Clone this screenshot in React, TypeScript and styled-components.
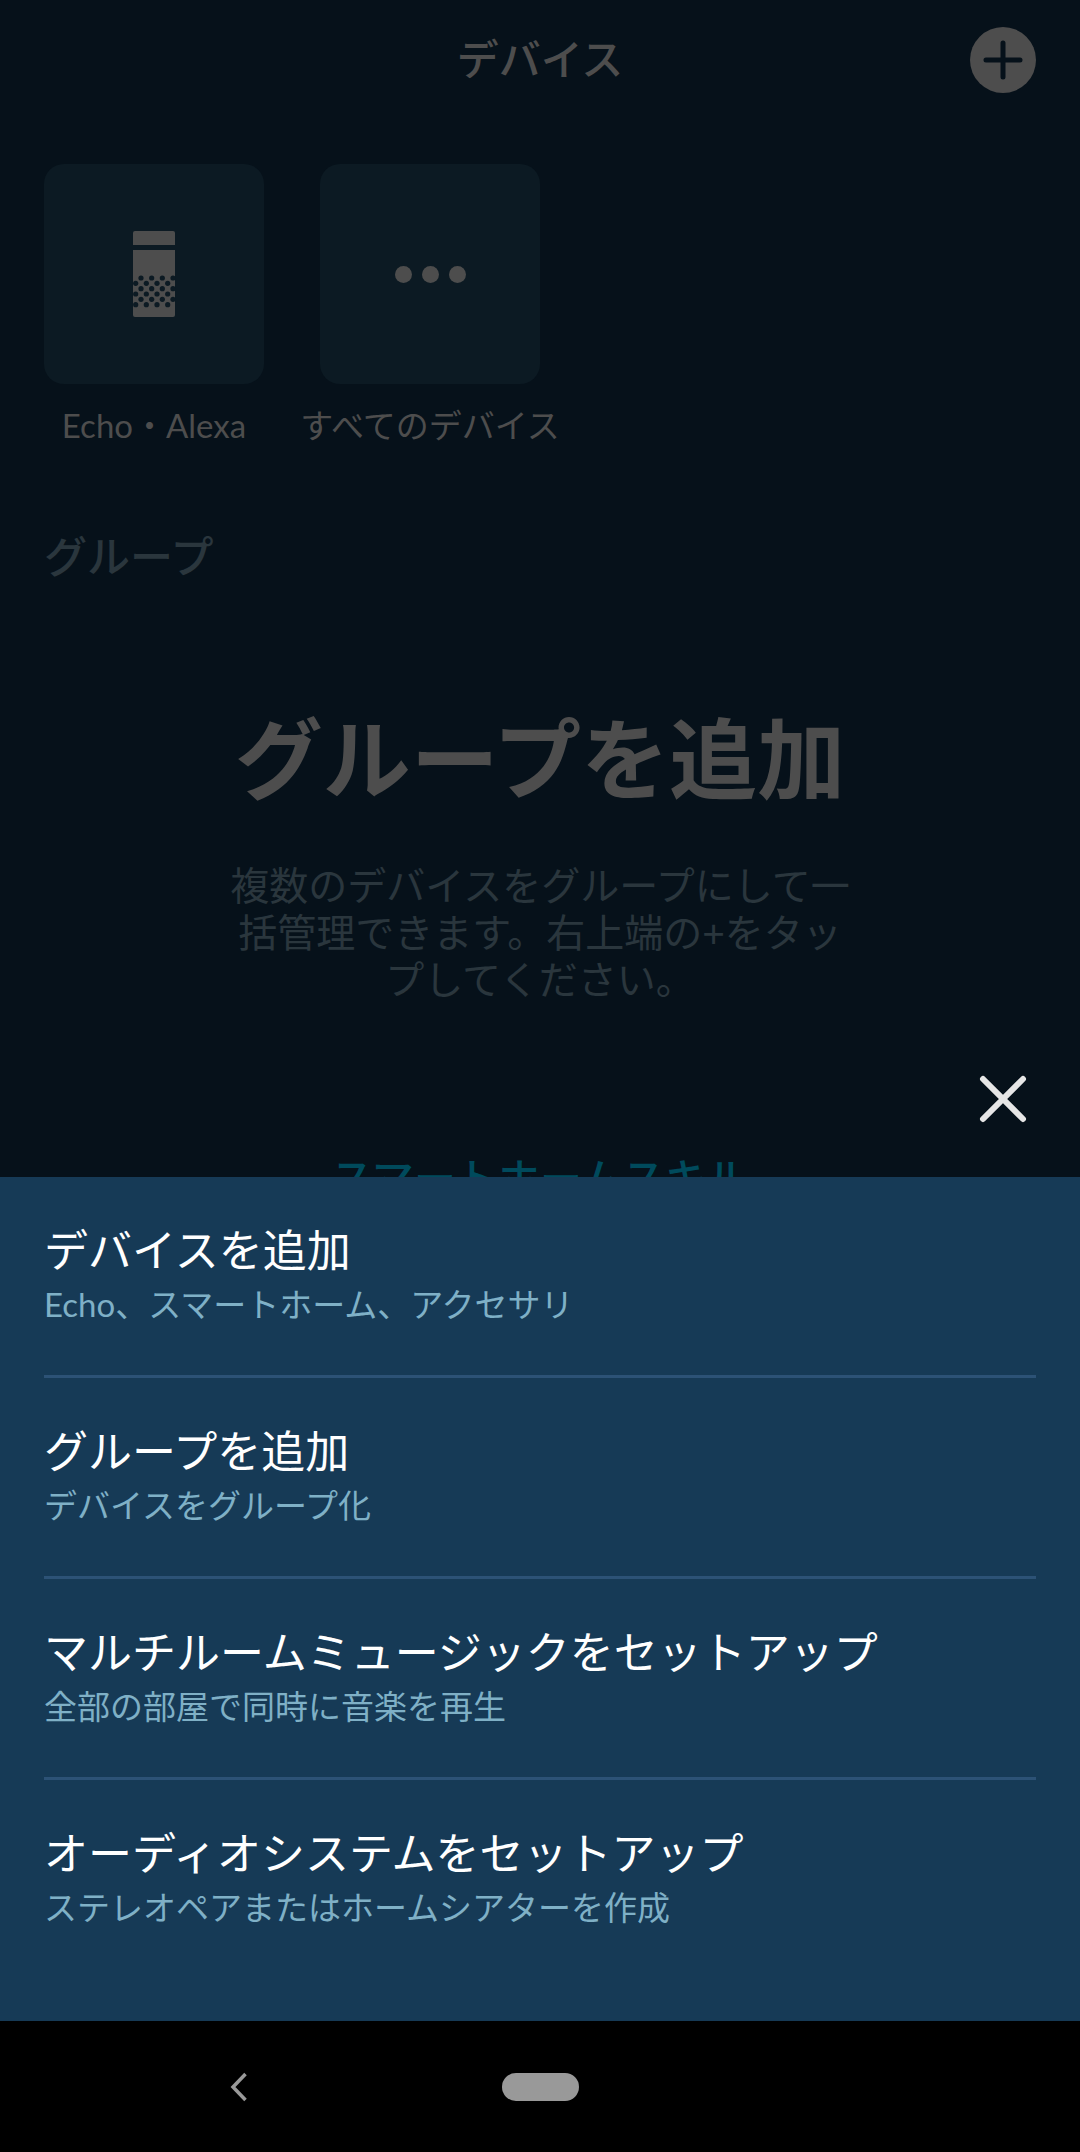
import React from 'react';
import styled, { createGlobalStyle } from 'styled-components';

const GlobalStyle = createGlobalStyle`
  html, body {
    margin: 0;
    padding: 0;
    background: #000;
  }
  * {
    box-sizing: border-box;
  }
  body {
    font-family: Lato, "Noto Sans CJK JP", "Noto Sans", sans-serif;
  }
`;

const menuItems = [
  { title: 'デバイスを追加', sub: 'Echo、スマートホーム、アクセサリ' },
  { title: 'グループを追加', sub: 'デバイスをグループ化' },
  { title: 'マルチルームミュージックをセットアップ', sub: '全部の部屋で同時に音楽を再生' },
  { title: 'オーディオシステムをセットアップ', sub: 'ステレオペアまたはホームシアターを作成' },
];

const speakerHoles: [number, number][] = [];
for (let row = 0; row < 6; row++) {
  for (let col = 0; col < 4; col++) {
    speakerHoles.push([row % 2 === 0 ? 8 + col * 10.67 : 2.67 + col * 10.67, 47 + row * 5.33]);
  }
}

const SpeakerIcon = () => (
  <svg width="44" height="86" viewBox="0 0 44 86">
    <path d="M2 0h38a2 2 0 0 1 2 2v12H0V2a2 2 0 0 1 2-2z" transform="translate(1 0)" fill="#4d4d4d" />
    <path d="M0 19h42v65a2 2 0 0 1-2 2H2a2 2 0 0 1-2-2z" transform="translate(1 0)" fill="#4d4d4d" />
    {speakerHoles.map(([x, y]) => (
      <circle key={`${x}-${y}`} cx={x + 1} cy={y} r="2.6" fill="#0c1a23" />
    ))}
  </svg>
);

const App: React.FC = () => {
  return (
    <>
      <GlobalStyle />
      <Screen>
        <Main>
          <Header>
            <Title>デバイス</Title>
            <AddButton>
              <svg width="40" height="40" viewBox="0 0 40 40">
                <path d="M20 3v34M3 20h34" stroke="#06111a" strokeWidth="5" strokeLinecap="round" />
              </svg>
            </AddButton>
          </Header>

          <Shortcuts>
            <Shortcut>
              <ShortcutCard>
                <SpeakerIcon />
              </ShortcutCard>
              <ShortcutLabel>Echo・Alexa</ShortcutLabel>
            </Shortcut>
            <Shortcut>
              <ShortcutCard>
                <Dots>
                  <Dot />
                  <Dot />
                  <Dot />
                </Dots>
              </ShortcutCard>
              <ShortcutLabel>すべてのデバイス</ShortcutLabel>
            </Shortcut>
          </Shortcuts>

          <SectionTitle>グループ</SectionTitle>

          <EmptyState>
            <EmptyTitle>グループを追加</EmptyTitle>
            <EmptyText>
              複数のデバイスをグループにして一
              <br />
              括管理できます。右上端の+をタッ
              <br />
              プしてください。
            </EmptyText>
            <SkillLink>スマートホームスキル</SkillLink>
          </EmptyState>

          <CloseButton>
            <svg width="48" height="48" viewBox="0 0 48 48">
              <path d="M4 4l40 40M44 4L4 44" stroke="#e6e6e6" strokeWidth="6" strokeLinecap="round" />
            </svg>
          </CloseButton>

          <Sheet>
            {menuItems.map((item, i) => (
              <MenuRow key={item.title} $last={i === menuItems.length - 1}>
                <MenuTitle>{item.title}</MenuTitle>
                <MenuSub>{item.sub}</MenuSub>
              </MenuRow>
            ))}
          </Sheet>
        </Main>

        <NavBar>
          <BackIcon>
            <svg width="20" height="30" viewBox="0 0 20 30">
              <path d="M17.5 2L5 15l12.5 13" fill="none" stroke="#999" strokeWidth="3.5" />
            </svg>
          </BackIcon>
          <HomePill />
        </NavBar>
      </Screen>
    </>
  );
};

const Screen = styled.div`
  width: 1080px;
  height: 2152px;
  display: flex;
  flex-direction: column;
  overflow: hidden;
`;

const Main = styled.main`
  position: relative;
  flex: 1;
  background: #06111a;
  overflow: hidden;
`;

const Header = styled.header`
  position: relative;
  height: 116px;
  padding-top: 2px;
  display: flex;
  align-items: center;
  justify-content: center;
`;

const Title = styled.h1`
  margin: 0;
  font-size: 42px;
  line-height: 60px;
  font-weight: 500;
  color: #4d4d4d;
`;

const AddButton = styled.div`
  position: absolute;
  top: 27px;
  right: 44px;
  width: 66px;
  height: 66px;
  border-radius: 50%;
  background: #4d4d4d;
  display: flex;
  align-items: center;
  justify-content: center;
`;

const Shortcuts = styled.div`
  display: flex;
  gap: 56px;
  padding: 48px 0 0 44px;
`;

const Shortcut = styled.div`
  width: 220px;
  display: flex;
  flex-direction: column;
  align-items: center;
`;

const ShortcutCard = styled.div`
  width: 220px;
  height: 220px;
  border-radius: 20px;
  background: #0c1a23;
  display: flex;
  align-items: center;
  justify-content: center;
`;

const ShortcutLabel = styled.div`
  margin-top: 18px;
  font-size: 33px;
  line-height: 46px;
  color: #4d4d4d;
  white-space: nowrap;
`;

const Dots = styled.div`
  display: flex;
  gap: 10px;
`;

const Dot = styled.span`
  width: 17px;
  height: 17px;
  border-radius: 50%;
  background: #4d4d4d;
`;

const SectionTitle = styled.h2`
  margin: 79px 0 0 44px;
  font-size: 43px;
  line-height: 60px;
  font-weight: 500;
  color: #2a363d;
`;

const EmptyState = styled.section`
  display: flex;
  flex-direction: column;
  align-items: center;
  margin-top: 111px;
`;

const EmptyTitle = styled.div`
  font-size: 88px;
  line-height: 120px;
  font-weight: 700;
  color: #4d4d4d;
  white-space: nowrap;
`;

const EmptyText = styled.p`
  margin: 44px 0 0;
  font-size: 39px;
  line-height: 47px;
  color: #2a363d;
  text-align: center;
  white-space: nowrap;
`;

const SkillLink = styled.div`
  margin-top: 145px;
  font-size: 42px;
  line-height: 60px;
  font-weight: 500;
  color: #004a5c;
  white-space: nowrap;
`;

const CloseButton = styled.div`
  position: absolute;
  top: 1075px;
  right: 53px;
  width: 48px;
  height: 48px;
`;

const Sheet = styled.div`
  position: absolute;
  top: 1177px;
  left: 0;
  right: 0;
  bottom: 0;
  padding: 0 44px;
  background: #163a56;
`;

const MenuRow = styled.div<{ $last?: boolean }>`
  height: 201px;
  padding-top: 44px;
  border-bottom: ${props => (props.$last ? 'none' : '3px solid #2c5276')};
`;

const MenuTitle = styled.div`
  font-size: 44px;
  line-height: 58px;
  color: #fff;
  white-space: nowrap;
`;

const MenuSub = styled.div`
  font-size: 33px;
  line-height: 46px;
  margin-top: 2px;
  color: #7fb0c6;
  white-space: nowrap;
`;

const NavBar = styled.nav`
  position: relative;
  height: 131px;
  background: #000;
  display: flex;
  align-items: center;
  justify-content: center;
`;

const BackIcon = styled.div`
  position: absolute;
  left: 228px;
  top: 50%;
  margin-top: -15px;
  width: 20px;
  height: 30px;
`;

const HomePill = styled.div`
  width: 77px;
  height: 28px;
  border-radius: 14px;
  background: #999;
`;

export default App;
